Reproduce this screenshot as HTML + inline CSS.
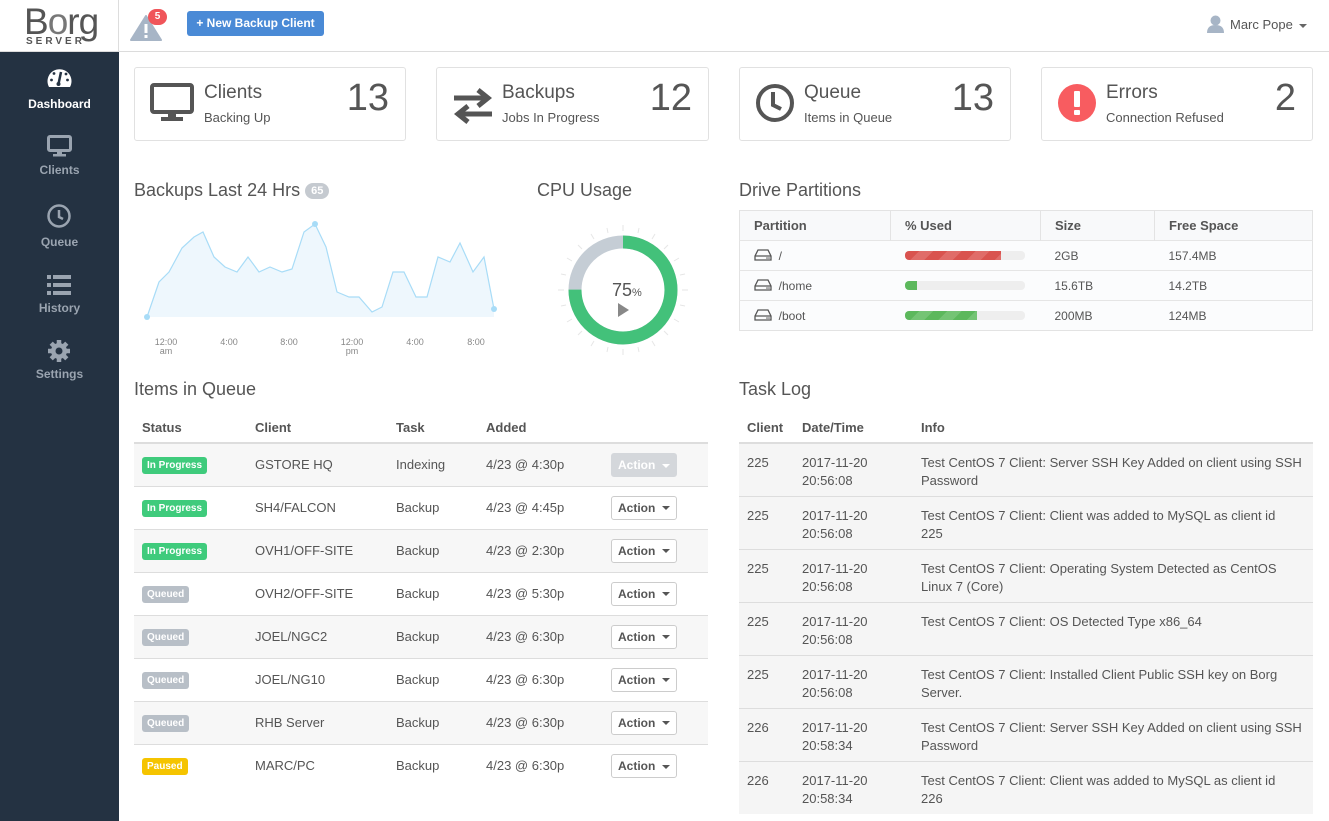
<!DOCTYPE html>
<html><head><meta charset="utf-8">
<style>
*{box-sizing:border-box;margin:0;padding:0}
body{width:1329px;height:821px;overflow:hidden;background:#fff;font-family:"Liberation Sans",sans-serif;color:#555;font-size:13px;position:relative}
.abs{position:absolute}
#hdr{left:0;top:0;width:1329px;height:52px;border-bottom:1px solid #dcdcdc;background:#fff}
#side{left:0;top:52px;width:119px;height:769px;background:#243242}
.nav{position:absolute;left:0;width:119px;text-align:center;color:#9aa4b0;font-weight:bold;font-size:12px}
.nav.act{color:#fff}
.card{position:absolute;top:67px;height:74px;border:1px solid #e1e1e1;border-radius:3px;background:#fff}
.card .t{position:absolute;left:69px;top:14px;font-size:19px;color:#555}
.card .s{position:absolute;left:69px;top:42px;font-size:13px;color:#555}
.card .n{position:absolute;right:16px;top:9px;font-size:38px;color:#555}
.card svg{position:absolute;left:15px;top:15px}
h2{position:absolute;font-size:18px;font-weight:normal;color:#555}
table{border-collapse:collapse;position:absolute}
th{text-align:left;font-weight:bold;color:#555;font-size:13px}
.lbl{display:inline-block;color:#fff;font-size:10px;font-weight:bold;padding:3px 5px;border-radius:3px}
.g{background:#3fcb7c}.q{background:#b8bfc7}.y{background:#f5c400}
.btn{display:inline-block;border:1px solid #ccc;border-radius:3px;padding:4px 6px;font-weight:bold;font-size:12px;color:#555;background:#fff}
.btn.dis{background:#d4d7db;border-color:#d4d7db;color:#fff}
.car{display:inline-block;width:0;height:0;border-left:4px solid transparent;border-right:4px solid transparent;border-top:4px solid currentColor;vertical-align:middle;margin-left:3px}
#q td{height:43px;border-top:1px solid #ddd;padding-left:8px;vertical-align:middle;font-size:13px}
#q tr:nth-child(even) td{background:#f7f7f7}
#t td{height:53px;border-top:1px solid #ddd;padding:10px 0 0 8px;vertical-align:top;line-height:18px;background:#f5f5f5}
#t td.i{white-space:nowrap}
#p td{height:30px;border-top:1px solid #e5e5e5;padding-left:14px;font-size:12px;background:#fbfcfd}
.bar{width:120px;height:9px;border-radius:4px;background:#eee;overflow:hidden}
.bar div{height:9px}
</style></head><body>
<div id="hdr" class="abs">
 <div class="abs" style="left:0;top:0;width:119px;height:51px;border-right:1px solid #ddd">
  <div class="abs" style="left:24px;top:2px;font-size:37px;line-height:40px;color:#555;letter-spacing:-1px">B<span style="color:#777">o</span>rg</div>
  <div class="abs" style="left:26px;top:36px;font-size:10px;font-weight:bold;letter-spacing:3px;color:#555">SERVER</div>
 </div>
 <svg class="abs" style="left:130px;top:14px" width="32" height="27" viewBox="0 0 32 27"><path d="M16 2 L31 26 L1 26 Z" fill="#a7b5c6" stroke="#a7b5c6" stroke-linejoin="round" stroke-width="2"/><rect x="14.5" y="10" width="3" height="9" fill="#fff"/><rect x="14.5" y="21" width="3" height="3" fill="#fff"/></svg>
 <div class="abs" style="left:148px;top:9px;width:19px;height:16px;border-radius:8px;background:#f0555a;color:#fff;font-size:10px;font-weight:bold;text-align:center;line-height:16px">5</div>
 <div class="abs" style="left:187px;top:11px;width:137px;height:25px;background:#4a8ad6;border-radius:3px;color:#fff;font-weight:bold;font-size:12px;line-height:25px;text-align:center">+ New Backup Client</div>
 <svg class="abs" style="left:1207px;top:15px" width="17" height="18" viewBox="0 0 17 18"><circle cx="8.5" cy="5.5" r="5" fill="#a7b5c6"/><path d="M0 18 Q0 10 8.5 10 Q17 10 17 18 Z" fill="#a7b5c6"/></svg>
 <div class="abs" style="left:1230px;top:17px;font-size:13px;color:#555">Marc Pope <span class="car" style="color:#666"></span></div>
</div>
<div id="side" class="abs">
 <svg class="abs" style="left:46px;top:14px" width="27" height="24" viewBox="0 0 27 24"><path d="M3 21 A12 12 0 1 1 24 21 Z" fill="#fff"/><path d="M15 6 L12.5 18" stroke="#243242" stroke-width="2.5"/><circle cx="12.5" cy="18" r="2" fill="#243242"/><circle cx="5.5" cy="14" r="1.4" fill="#243242"/><circle cx="8" cy="7.5" r="1.4" fill="#243242"/><circle cx="20" cy="8" r="1.4" fill="#243242"/><circle cx="21.5" cy="14" r="1.4" fill="#243242"/></svg>
 <div class="nav act" style="top:45px">Dashboard</div>
 <svg class="abs" style="left:47px;top:83px" width="25" height="22" viewBox="0 0 25 22"><rect x="1.5" y="1.5" width="22" height="14" rx="1.5" fill="none" stroke="#9aa4b0" stroke-width="3"/><rect x="10" y="16" width="5" height="3" fill="#9aa4b0"/><rect x="6" y="19" width="13" height="2.5" fill="#9aa4b0"/></svg>
 <div class="nav" style="top:111px">Clients</div>
 <svg class="abs" style="left:47px;top:152px" width="24" height="24" viewBox="0 0 24 24"><circle cx="12" cy="12" r="10.5" fill="none" stroke="#9aa4b0" stroke-width="2.5"/><path d="M12 6 V13 L16 15" fill="none" stroke="#9aa4b0" stroke-width="2.5"/></svg>
 <div class="nav" style="top:183px">Queue</div>
 <svg class="abs" style="left:47px;top:223px" width="24" height="20" viewBox="0 0 24 20"><g fill="#9aa4b0"><rect x="0" y="0" width="4" height="4"/><rect x="6" y="0" width="18" height="4"/><rect x="0" y="8" width="4" height="4"/><rect x="6" y="8" width="18" height="4"/><rect x="0" y="16" width="4" height="4"/><rect x="6" y="16" width="18" height="4"/></g></svg>
 <div class="nav" style="top:249px">History</div>
 <svg class="abs" style="left:47px;top:287px" width="24" height="24" viewBox="0 0 24 24"><g fill="#9aa4b0"><circle cx="12" cy="12" r="8"/><g stroke="#9aa4b0" stroke-width="4.5"><path d="M12 1V23M1 12H23M4.2 4.2L19.8 19.8M19.8 4.2L4.2 19.8"/></g></g><circle cx="12" cy="12" r="3.5" fill="#243242"/></svg>
 <div class="nav" style="top:315px">Settings</div>
</div>

<div class="card" style="left:134px;width:272px"><svg width="44" height="40" viewBox="0 0 44 40"><rect x="2" y="2" width="40" height="27" rx="2" fill="none" stroke="#555" stroke-width="4"/><rect x="18" y="29" width="8" height="5" fill="#555"/><rect x="11" y="34" width="22" height="4" fill="#555"/></svg><div class="t">Clients</div><div class="s">Backing Up</div><div class="n">13</div></div>
<div class="card" style="left:436px;width:273px"><svg width="42" height="40" viewBox="0 0 42 40" style="top:18px"><path d="M2 12H34M26 4L36 12L26 20" fill="none" stroke="#555" stroke-width="5"/><path d="M40 28H8M16 20L6 28L16 36" fill="none" stroke="#555" stroke-width="5"/></svg><div class="t" style="left:65px">Backups</div><div class="s" style="left:65px">Jobs In Progress</div><div class="n">12</div></div>
<div class="card" style="left:739px;width:272px"><svg width="40" height="40" viewBox="0 0 40 40"><circle cx="20" cy="20" r="17" fill="none" stroke="#555" stroke-width="4"/><path d="M18 9V22L26 26" fill="none" stroke="#555" stroke-width="4"/></svg><div class="t" style="left:64px">Queue</div><div class="s" style="left:64px">Items in Queue</div><div class="n">13</div></div>
<div class="card" style="left:1041px;width:272px"><svg width="40" height="40" viewBox="0 0 40 40"><circle cx="20" cy="20" r="19" fill="#f85c60"/><rect x="17" y="8" width="6" height="16" rx="1" fill="#fff"/><rect x="17" y="27" width="6" height="5" rx="1" fill="#fff"/></svg><div class="t" style="left:64px">Errors</div><div class="s" style="left:64px">Connection Refused</div><div class="n">2</div></div>

<h2 style="left:134px;top:180px">Backups Last 24 Hrs <span style="display:inline-block;background:#c5cad0;color:#fff;font-size:11px;font-weight:bold;border-radius:9px;padding:2px 6px;vertical-align:2px">65</span></h2>
<h2 style="left:537px;top:180px">CPU Usage</h2>
<h2 style="left:739px;top:180px">Drive Partitions</h2>

<svg class="abs" style="left:0;top:0" width="720" height="380">
 <path d="M147 317 L159 282 L169 272 L182 248 L194 237 L203 232 L214 257 L225 267 L237 272 L248 257 L259 272 L270 267 L282 272 L292 269 L304 232 L315 224 L326 247 L337 292 L349 297 L359 297 L372 312 L382 307 L393 272 L404 272 L416 297 L427 297 L438 257 L450 262 L460 243 L473 272 L484 257 L494 309 L494 317 Z" fill="#eef7fd"/>
 <path d="M147 317 L159 282 L169 272 L182 248 L194 237 L203 232 L214 257 L225 267 L237 272 L248 257 L259 272 L270 267 L282 272 L292 269 L304 232 L315 224 L326 247 L337 292 L349 297 L359 297 L372 312 L382 307 L393 272 L404 272 L416 297 L427 297 L438 257 L450 262 L460 243 L473 272 L484 257 L494 309" fill="none" stroke="#a8dcf7" stroke-width="1.2"/>
 <circle cx="147" cy="317" r="3" fill="#a8dcf7"/><circle cx="315" cy="224" r="3" fill="#a8dcf7"/><circle cx="494" cy="309" r="3" fill="#a8dcf7"/>
 <g font-family="Liberation Sans" font-size="9" fill="#888" text-anchor="middle">
  <text x="166" y="345">12:00</text><text x="166" y="354">am</text><text x="229" y="345">4:00</text><text x="289" y="345">8:00</text><text x="352" y="345">12:00</text><text x="352" y="354">pm</text><text x="415" y="345">4:00</text><text x="476" y="345">8:00</text>
 </g>
 <g stroke="#e6e6e6" stroke-width="1">
  <path d="M623 225v6M623 349v6M558 290h6M682 290h6M655 234l-3 5M591 346l3-5M679 258l-5 3M567 322l5-3M679 322l-5-3M567 258l5 3M655 346l-3-5M591 234l3 5M639 228l-1 5M607 352l1-5M668 245l-4 4M578 335l4-4M685 274l-5 1M561 306l5-1M685 306l-5-1M561 274l5 1M668 335l-4-4M578 245l4 4M639 352l-1-5M607 228l1 5"/>
 </g>
 <circle cx="623" cy="290" r="48" fill="none" stroke="#c5cdd5" stroke-width="13"/>
 <circle cx="623" cy="290" r="48" fill="none" stroke="#43c17a" stroke-width="13" stroke-dasharray="226.2 301.6" transform="rotate(-90 623 290)"/>
 <text x="612" y="296" font-family="Liberation Sans" font-size="18" fill="#555">75<tspan font-size="11">%</tspan></text>
 <path d="M618 303 L629 310 L618 317 Z" fill="#888"/>
</svg>

<table id="p" style="left:739px;top:210px;width:574px;border:1px solid #e3e3e3">
 <tr style="background:#f8f9fa"><th style="height:30px;padding-left:14px;width:151px;border-right:1px solid #e3e3e3">Partition</th><th style="padding-left:14px;width:150px;border-right:1px solid #e3e3e3">% Used</th><th style="padding-left:14px;width:114px;border-right:1px solid #e3e3e3">Size</th><th style="padding-left:14px">Free Space</th></tr>
 <tr><td><svg width="18" height="12" viewBox="0 0 18 12" style="vertical-align:-1px"><path d="M1 7 L4 1 H14 L17 7 V11 H1 Z M1 7 H17" fill="none" stroke="#555" stroke-width="1.3"/><circle cx="13" cy="9" r=".8" fill="#555"/><circle cx="15" cy="9" r=".8" fill="#555"/></svg>&nbsp; /</td><td><div class="bar"><div style="width:80%;background:repeating-linear-gradient(135deg,#d9534f 0 10px,#e06c69 10px 20px)"></div></div></td><td>2GB</td><td>157.4MB</td></tr>
 <tr><td><svg width="18" height="12" viewBox="0 0 18 12" style="vertical-align:-1px"><path d="M1 7 L4 1 H14 L17 7 V11 H1 Z M1 7 H17" fill="none" stroke="#555" stroke-width="1.3"/><circle cx="13" cy="9" r=".8" fill="#555"/><circle cx="15" cy="9" r=".8" fill="#555"/></svg>&nbsp; /home</td><td><div class="bar"><div style="width:10%;background:#5cb85c"></div></div></td><td>15.6TB</td><td>14.2TB</td></tr>
 <tr><td><svg width="18" height="12" viewBox="0 0 18 12" style="vertical-align:-1px"><path d="M1 7 L4 1 H14 L17 7 V11 H1 Z M1 7 H17" fill="none" stroke="#555" stroke-width="1.3"/><circle cx="13" cy="9" r=".8" fill="#555"/><circle cx="15" cy="9" r=".8" fill="#555"/></svg>&nbsp; /boot</td><td><div class="bar"><div style="width:60%;background:repeating-linear-gradient(135deg,#5cb85c 0 10px,#74c474 10px 20px)"></div></div></td><td>200MB</td><td>124MB</td></tr>
</table>

<h2 style="left:134px;top:379px">Items in Queue</h2>
<h2 style="left:739px;top:379px">Task Log</h2>

<table id="q" style="left:134px;top:412px;width:574px">
 <tr><th style="height:31px;padding-left:8px;width:113px;border-bottom:2px solid #ddd">Status</th><th style="padding-left:8px;width:141px;border-bottom:2px solid #ddd">Client</th><th style="padding-left:8px;width:90px;border-bottom:2px solid #ddd">Task</th><th style="padding-left:8px;width:125px;border-bottom:2px solid #ddd">Added</th><th style="border-bottom:2px solid #ddd"></th></tr>
 <tr><td><span class="lbl g">In Progress</span></td><td>GSTORE HQ</td><td>Indexing</td><td>4/23 @ 4:30p</td><td><span class="btn dis">Action <span class="car"></span></span></td></tr>
 <tr><td><span class="lbl g">In Progress</span></td><td>SH4/FALCON</td><td>Backup</td><td>4/23 @ 4:45p</td><td><span class="btn">Action <span class="car"></span></span></td></tr>
 <tr><td><span class="lbl g">In Progress</span></td><td>OVH1/OFF-SITE</td><td>Backup</td><td>4/23 @ 2:30p</td><td><span class="btn">Action <span class="car"></span></span></td></tr>
 <tr><td><span class="lbl q">Queued</span></td><td>OVH2/OFF-SITE</td><td>Backup</td><td>4/23 @ 5:30p</td><td><span class="btn">Action <span class="car"></span></span></td></tr>
 <tr><td><span class="lbl q">Queued</span></td><td>JOEL/NGC2</td><td>Backup</td><td>4/23 @ 6:30p</td><td><span class="btn">Action <span class="car"></span></span></td></tr>
 <tr><td><span class="lbl q">Queued</span></td><td>JOEL/NG10</td><td>Backup</td><td>4/23 @ 6:30p</td><td><span class="btn">Action <span class="car"></span></span></td></tr>
 <tr><td><span class="lbl q">Queued</span></td><td>RHB Server</td><td>Backup</td><td>4/23 @ 6:30p</td><td><span class="btn">Action <span class="car"></span></span></td></tr>
 <tr><td><span class="lbl y">Paused</span></td><td>MARC/PC</td><td>Backup</td><td>4/23 @ 6:30p</td><td><span class="btn">Action <span class="car"></span></span></td></tr>
</table>

<table id="t" style="left:739px;top:412px;width:574px">
 <tr><th style="height:31px;padding-left:8px;width:55px;border-bottom:2px solid #ddd">Client</th><th style="padding-left:8px;width:119px;border-bottom:2px solid #ddd">Date/Time</th><th style="padding-left:8px;border-bottom:2px solid #ddd">Info</th></tr>
 <tr><td>225</td><td>2017-11-20<br>20:56:08</td><td class="i">Test CentOS 7 Client: Server SSH Key Added on client using SSH<br>Password</td></tr>
 <tr><td>225</td><td>2017-11-20<br>20:56:08</td><td class="i">Test CentOS 7 Client: Client was added to MySQL as client id<br>225</td></tr>
 <tr><td>225</td><td>2017-11-20<br>20:56:08</td><td class="i">Test CentOS 7 Client: Operating System Detected as CentOS<br>Linux 7 (Core)</td></tr>
 <tr><td>225</td><td>2017-11-20<br>20:56:08</td><td class="i">Test CentOS 7 Client: OS Detected Type x86_64</td></tr>
 <tr><td>225</td><td>2017-11-20<br>20:56:08</td><td class="i">Test CentOS 7 Client: Installed Client Public SSH key on Borg<br>Server.</td></tr>
 <tr><td>226</td><td>2017-11-20<br>20:58:34</td><td class="i">Test CentOS 7 Client: Server SSH Key Added on client using SSH<br>Password</td></tr>
 <tr><td>226</td><td>2017-11-20<br>20:58:34</td><td class="i">Test CentOS 7 Client: Client was added to MySQL as client id<br>226</td></tr>
</table>
</body></html>
